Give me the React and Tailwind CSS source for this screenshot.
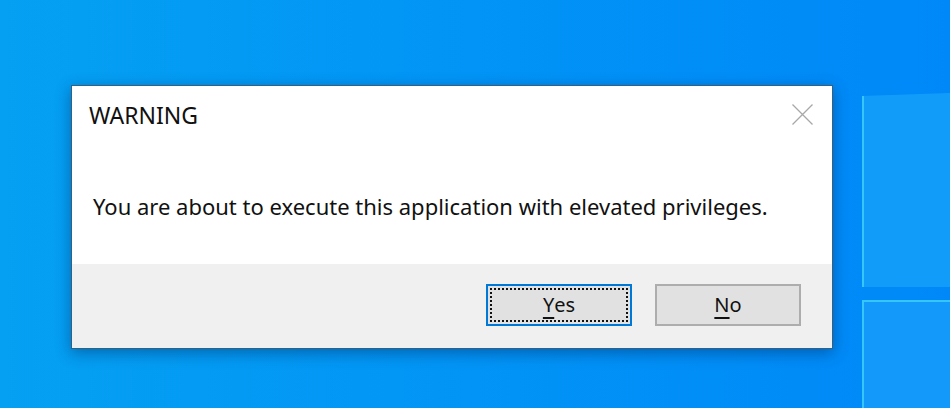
import React from "react";

// Windows 10 style elevation warning dialog over the desktop
const FONT = { fontFamily: '"Noto Sans", "Open Sans", "Liberation Sans", sans-serif' };

function CloseIcon() {
  return (
    <svg width="21" height="21" viewBox="0 0 21 21" className="block">
      <path d="M0.5 0.5 L20.5 20.5 M20.5 0.5 L0.5 20.5" stroke="#a8a8a8" strokeWidth="1.3" fill="none" />
    </svg>
  );
}

function DialogButton({ label, hotkey, rest, focused }) {
  return (
    <button
      className={
        "w-[146px] h-[42px] flex items-center justify-center text-[20px] text-[#111] " +
        (focused
          ? "bg-[#e1e1e1] border-2 border-[#0078d7] p-[2px]"
          : "bg-[#e1e1e1] border-2 border-[#adadad]")
      }
    >
      <span
        className={
          "w-full h-full flex items-center justify-center " +
          (focused ? "border-2 border-dotted border-[#111]" : "")
        }
      >
        <span className="underline underline-offset-[5px] decoration-[1.5px]">{hotkey}</span>
        {rest}
      </span>
    </button>
  );
}

function Desktop({ children }) {
  return (
    <div className="relative w-[950px] h-[408px] overflow-hidden bg-gradient-to-r from-[#05a0f2] via-[#0294f6] to-[#0088f8]">
      {/* windows logo panes at right */}
      <div className="absolute left-[862px] top-[92px] w-[120px] h-[195px] bg-[#129cfa] border-l-2 border-[#36c6fb] [clip-path:polygon(0_4px,100%_0,100%_100%,0_100%)]" />
      <div className="absolute left-[862px] top-[300px] w-[120px] h-[120px] bg-[#1399fa] border-l-2 border-t-2 border-[#36c6fb]" />
      {children}
    </div>
  );
}

export default function App() {
  return (
    <Desktop>
      <div className="relative pl-[71px] pt-[85px]" style={FONT}>
        <div className="w-[762px] h-[264px] bg-white border border-[#3a5f7d] shadow-[0_4px_14px_rgba(0,40,90,0.45)] flex flex-col">
          <div className="flex items-start justify-between h-[60px] pl-[17px] pr-[19px] pt-[14px]">
            <span className="text-[23px] leading-[30px] text-[#111]">WARNING</span>
            <div className="pt-[4px]">
              <CloseIcon />
            </div>
          </div>
          <div className="flex-1 pl-[21px] pt-[46px] text-[22px] leading-[28px] text-[#111]">
            You are about to execute this application with elevated privileges.
          </div>
          <div className="h-[84px] bg-[#f0f0f0] flex justify-end items-start gap-[23px] pt-[20px] pr-[31px]">
            <DialogButton hotkey="Y" rest="es" focused />
            <DialogButton hotkey="N" rest="o" />
          </div>
        </div>
      </div>
    </Desktop>
  );
}
